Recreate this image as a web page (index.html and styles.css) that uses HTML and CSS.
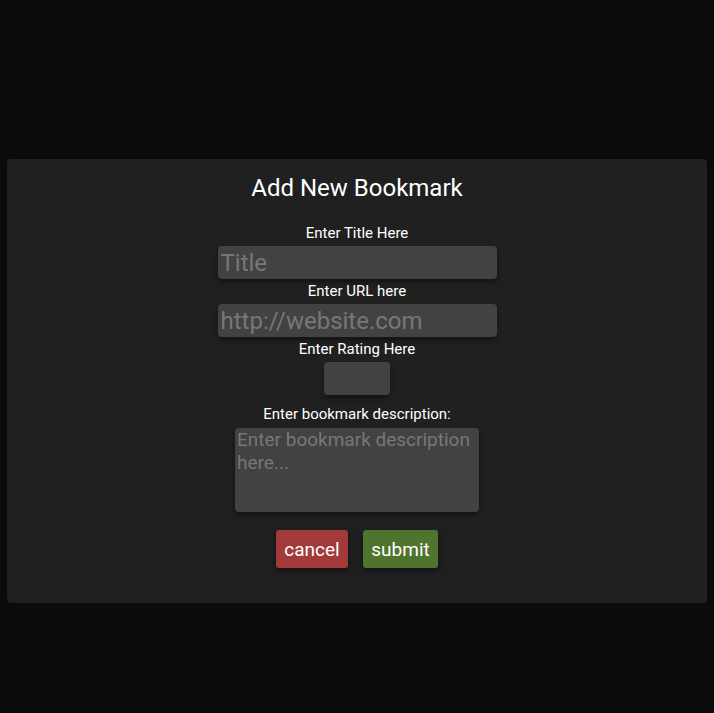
FILE: index.html
```html
<!DOCTYPE html>
<html>
<head>
<meta charset="utf-8">
<link rel="stylesheet" href="styles.css">
</head>
<body>
<div class="page">
  <form class="card">
    <h2 class="title">Add New Bookmark</h2>
    <label class="label" for="t">Enter Title Here</label>
    <input id="t" class="field wide" type="text" placeholder="Title">
    <label class="label" for="u">Enter URL here</label>
    <input id="u" class="field wide" type="text" placeholder="http://website.com">
    <label class="label" for="r">Enter Rating Here</label>
    <input id="r" class="field rating" type="text">
    <label class="label desc-label" for="d">Enter bookmark description:</label>
    <textarea id="d" class="field area" placeholder="Enter bookmark description here..."></textarea>
    <div class="actions">
      <button type="button" class="btn cancel">cancel</button>
      <button type="button" class="btn submit">submit</button>
    </div>
  </form>
</div>
</body>
</html>
```

FILE: styles.css
```css
html, body {
  margin: 0;
  padding: 0;
  background: #0b0b0b;
  font-family: Roboto, "Liberation Sans", sans-serif;
  color: #fff;
}
.page {
  height: 713px;
  padding: 159px 7px 0;
  box-sizing: border-box;
}
.card {
  height: 444px;
  box-sizing: border-box;
  background: #202020;
  border-radius: 4px;
  display: flex;
  flex-direction: column;
  align-items: center;
  padding-top: 15px;
  margin: 0;
}
.title {
  margin: 0 0 23px;
  font-size: 24px;
  font-weight: 400;
  line-height: 28px;
}
.label {
  font-size: 15px;
  font-weight: 400;
  line-height: 17px;
  margin-bottom: 4px;
}
.field {
  background: #424242;
  border: none;
  border-radius: 4px;
  box-shadow: 0 3px 5px rgba(0, 0, 0, 0.45);
  color: #fff;
  font-family: Roboto, "Liberation Sans", sans-serif;
  outline: none;
  box-sizing: border-box;
  margin: 0 0 4px;
}
.field::placeholder {
  color: #777;
}
.wide {
  width: 279px;
  height: 33px;
  font-size: 24px;
  padding: 0 3px;
}
.rating {
  width: 66px;
  height: 33px;
  font-size: 20px;
  margin-bottom: 11px;
}
.desc-label {
  margin-bottom: 5px;
}
.area {
  width: 244px;
  height: 84px;
  font-size: 19px;
  line-height: 23px;
  padding: 0 2px;
  resize: none;
  display: block;
  margin-bottom: 18px;
}
.actions {
  display: flex;
  gap: 15px;
}
.btn {
  height: 38px;
  border: none;
  border-radius: 3px;
  color: #fff;
  font-family: Roboto, "Liberation Sans", sans-serif;
  font-size: 19px;
  font-weight: 400;
  box-shadow: 0 3px 6px rgba(0, 0, 0, 0.5);
  padding: 0;
}
.cancel {
  width: 72px;
  background: #a33a3a;
}
.submit {
  width: 75px;
  background: #4e742e;
}
```
